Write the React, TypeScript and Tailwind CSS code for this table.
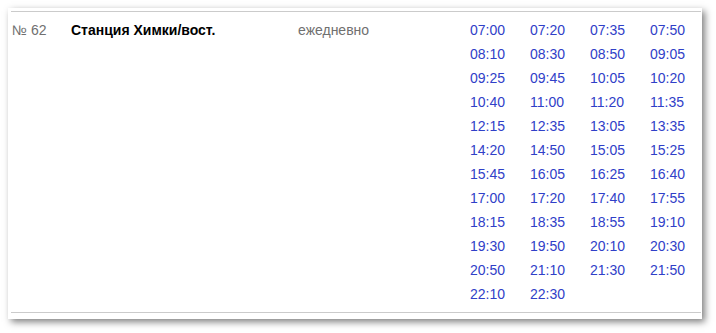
import React from 'react';

const times = [
    '07:00', '07:20', '07:35', '07:50',
    '08:10', '08:30', '08:50', '09:05',
    '09:25', '09:45', '10:05', '10:20',
    '10:40', '11:00', '11:20', '11:35',
    '12:15', '12:35', '13:05', '13:35',
    '14:20', '14:50', '15:05', '15:25',
    '15:45', '16:05', '16:25', '16:40',
    '17:00', '17:20', '17:40', '17:55',
    '18:15', '18:35', '18:55', '19:10',
    '19:30', '19:50', '20:10', '20:30',
    '20:50', '21:10', '21:30', '21:50',
    '22:10', '22:30',
];

const App: React.FC = () => {
    return (
        <div className="w-[716px] h-[333px] bg-white pt-2 pl-2 font-['Liberation_Sans',Arial,sans-serif] text-[14px] leading-[24px]">
            <div className="w-[694px] h-[311px] bg-white shadow-[3px_3px_7px_rgba(0,0,0,0.5)] pt-[3px] pl-[3px] pr-[1px]">
                <div className="flex border-y border-[#cbcbcb] pt-[6px] pb-[6px]">
                    <div className="w-[60px] shrink-0 pl-[1px] text-[#707070]">№ 62</div>
                    <div className="w-[227px] shrink-0 font-bold text-black">Станция Химки/вост.</div>
                    <div className="w-[172px] shrink-0 text-[#707070]">ежедневно</div>
                    <div className="grid flex-1 grid-cols-[60px_60px_60px_1fr]">
                        {times.map((t) => (
                            <span key={t} className="text-[#3040c8]">{t}</span>
                        ))}
                    </div>
                </div>
            </div>
        </div>
    );
};

export default App;
